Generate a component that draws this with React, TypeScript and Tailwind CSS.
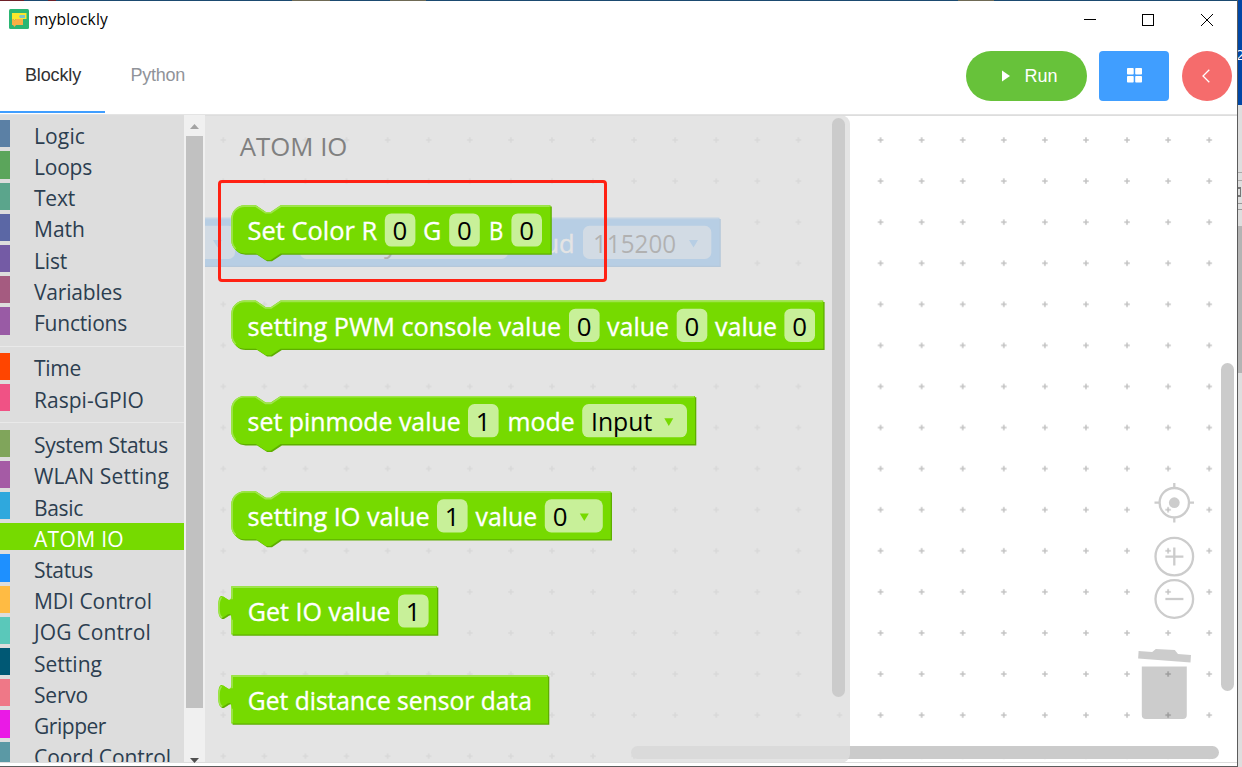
import React, { useLayoutEffect, useRef, useState } from "react";

const UI = "font-['Open_Sans','Noto_Sans',sans-serif]";
const ARIAL = "font-['Liberation_Sans',Arial,sans-serif]";

/* Text set to a fixed advance width by adjusting its tracking. */
function Fit({ width, children }: { width: number; children: string }) {
  const ref = useRef<HTMLSpanElement>(null);
  const [spacing, setSpacing] = useState(0);
  useLayoutEffect(() => {
    if (ref.current) {
      const natural = ref.current.getBoundingClientRect().width;
      setSpacing((width - natural) / children.length);
    }
  }, [width, children]);
  return (
    <span ref={ref} className="whitespace-nowrap" style={{ letterSpacing: `${spacing}px` }}>
      {children}
    </span>
  );
}

type Category = { name: string; width: number; bar: string; active?: boolean };

const groups: Category[][] = [
  [
    { name: "Logic", width: 51, bar: "bg-[#5b80a5]" },
    { name: "Loops", width: 58, bar: "bg-[#5ba55b]" },
    { name: "Text", width: 41, bar: "bg-[#5ba58c]" },
    { name: "Math", width: 51, bar: "bg-[#5b67a5]" },
    { name: "List", width: 33, bar: "bg-[#745ba5]" },
    { name: "Variables", width: 88, bar: "bg-[#a55b80]" },
    { name: "Functions", width: 93, bar: "bg-[#995ba5]" },
  ],
  [
    { name: "Time", width: 47, bar: "bg-[#ff4500]" },
    { name: "Raspi-GPIO", width: 110, bar: "bg-[#f05285]" },
  ],
  [
    { name: "System Status", width: 134, bar: "bg-[#80a55b]" },
    { name: "WLAN Setting", width: 135, bar: "bg-[#a55ba5]" },
    { name: "Basic", width: 49, bar: "bg-[#2fa8dd]" },
    { name: "ATOM IO", width: 90, bar: "bg-[#76da00]", active: true },
    { name: "Status", width: 59, bar: "bg-[#1e90ff]" },
    { name: "MDI Control", width: 118, bar: "bg-[#ffbb43]" },
    { name: "JOG Control", width: 117, bar: "bg-[#5ac8ba]" },
    { name: "Setting", width: 68, bar: "bg-[#005874]" },
    { name: "Servo", width: 54, bar: "bg-[#ef7887]" },
    { name: "Gripper", width: 72, bar: "bg-[#ea1ae6]" },
    { name: "Coord Control", width: 137, bar: "bg-[#5b99a5]" },
  ],
];

function Toolbox() {
  return (
    <div className={`h-full w-[184px] shrink-0 overflow-hidden bg-[#dddddd] pt-[5.2px] text-[21px] ${UI}`}>
      {groups.map((group, g) => (
        <div key={g} className={g > 0 ? "mt-[11px] border-t border-[#e9e9e9] pt-[6.4px]" : ""}>
          {group.map((c) => (
            <div
              key={c.name}
              className={`mb-[4px] flex h-[27.2px] items-center ${c.active ? "bg-[#76da00] text-white" : "text-[#2c3e50]"}`}
            >
              <div className={`h-full w-[10px] ${c.bar}`} />
              <div className="pl-[24px] pt-[4px] leading-[26px]">
                <Fit width={c.width}>{c.name}</Fit>
              </div>
            </div>
          ))}
        </div>
      ))}
    </div>
  );
}

function ToolboxScrollbar() {
  return (
    <div className="flex h-full w-[21px] shrink-0 flex-col items-center bg-[#f0f0f0]">
      <div className="flex h-[21px] shrink-0 items-center pt-[2px]">
        <svg width="9" height="5" viewBox="0 0 9 5"><path d="M0 5L4.5 0L9 5z" fill="#a3a3a3" /></svg>
      </div>
      <div className="mr-[1px] h-[572px] w-[17px] bg-[#c1c1c1]" />
      <div className="-mb-[1px] mt-auto"><svg width="9" height="5" viewBox="0 0 9 5"><path d="M0 0H9L4.5 5z" fill="#505050" /></svg></div>
    </div>
  );
}

type Item =
  | { kind: "label"; text: string; x1: number; x2: number }
  | { kind: "field"; text: string; x1: number; x2: number; t1: number; t2: number; arrow?: number };

type BlockProps = { shape: "stack" | "value"; x: number; y: number; right: number; items: Item[]; color: string; dark: string; light: string };

const H = 48.1;

function outline(shape: string, x: number, y: number, r: number) {
  return shape === "stack"
    ? `M${x} ${y + 13.1}a13.1 13.1 0 0 1 13.1 -13.1H${x + 24.6}l9.9 6.6h4.9l9.9 -6.6H${r}v${H}H${x + 49.3}l-9.9 6.6h-4.9l-9.9 -6.6H${x + 13.1}a13.1 13.1 0 0 1 -13.1 -13.1z`
    : `M${x} ${y}H${r}v${H}H${x}V${y + 32.9}c0 -16.4 -13.1 13.1 -13.1 -12.3s13.1 4.1 13.1 -12.3z`;
}

function highlight(shape: string, x: number, y: number, r: number) {
  const a = x + 0.8;
  const b = y + 0.8;
  return shape === "stack"
    ? `M${x + 4.4} ${y + H - 4.4}A12.3 12.3 0 0 1 ${a} ${y + H - 13.1}V${y + 13.1}A12.3 12.3 0 0 1 ${x + 13.1} ${b}H${x + 24.2}l9.9 6.6h5.7l9.9 -6.6H${r - 0.8}`
    : `M${a} ${y + H - 0.8}V${y + 33.5}M${x - 9} ${y + 31.2}c-3 -1 -3.4 -4.5 -3.4 -10c0 -5 .6 -8 2.6 -10.3M${a} ${y + 13}V${b}H${r - 0.8}`;
}

function Block({ shape, x, y, right, items, color, dark, light }: BlockProps) {
  return (
    <g>
      <path d={outline(shape, x, y, right)} fill={dark} transform="translate(1.3 1.3)" />
      <path d={outline(shape, x, y, right)} fill={color} />
      <path d={highlight(shape, x, y, right)} fill="none" stroke={light} strokeWidth="1.6" />
      {items.map((it, i) =>
        it.kind === "label" ? (
          <text key={i} x={it.x1 - 0.9} y={y + 35} textLength={it.x2 - it.x1 + 2} lengthAdjust="spacingAndGlyphs" fill="#fff" stroke="#fff" strokeWidth="0.35">
            {it.text}
          </text>
        ) : (
          <g key={i}>
            <rect x={it.x1} y={y + 8.1} width={it.x2 - it.x1} height="33.2" rx="6.5" fill="#fff" fillOpacity="0.6" />
            <text x={it.t1 - 1.0} y={y + 35} textLength={it.t2 - it.t1 + 2.2} lengthAdjust="spacingAndGlyphs" fill="#000">
              {it.text}
            </text>
            {it.arrow && <path d={`M${it.arrow} ${y + 22.3}h9l-4.5 7.6z`} fill={color} />}
          </g>
        ),
      )}
    </g>
  );
}

const label = (text: string, x1: number, x2: number): Item => ({ kind: "label", text, x1, x2 });
const field = (text: string, x1: number, x2: number, t1: number, t2: number, arrow?: number): Item => ({ kind: "field", text, x1, x2, t1, t2, arrow });
const digit = (text: string, x1: number): Item => field(text, x1, x1 + 30.6, x1 + 8.8, x1 + 21.4);

const green = { color: "#76da00", dark: "#5eae00", light: "#9fe54d" };

const flyoutBlocks: BlockProps[] = [
  { ...green, shape: "stack", x: 231.3, y: 205.3, right: 550.5, items: [label("Set Color R", 248.5, 376), digit("0", 384.8), label("G", 424, 440.3), digit("0", 449.2), label("B", 490.0, 502.3), digit("0", 511.4)] },
  { ...green, shape: "stack", x: 231.3, y: 300.6, right: 823.3, items: [label("setting PWM console value", 248.5, 560), digit("0", 569), label("value", 608, 668), digit("0", 676.7), label("value", 716, 776), digit("0", 784.4)] },
  { ...green, shape: "stack", x: 231.3, y: 396, right: 695, items: [label("set pinmode value", 248.5, 459.5), digit("1", 468), label("mode", 508.5, 573.5), field("Input", 582.2, 687, 592, 651, 664.3)] },
  { ...green, shape: "stack", x: 231.3, y: 491.2, right: 610.7, items: [label("setting IO value", 248.5, 428.5), digit("1", 437), label("value", 476.5, 536), field("0", 544.8, 602.8, 553.8, 566.4, 579.8)] },
  { ...green, shape: "value", x: 231.3, y: 586.3, right: 437, items: [label("Get IO value", 248.7, 389.5), digit("1", 398)] },
  { ...green, shape: "value", x: 231.3, y: 675.3, right: 548, items: [label("Get distance sensor data", 248.7, 530.7)] },
];

function Canvas() {
  return (
    <svg className={`block text-[25.5px] ${UI}`} width="1032" height="648" viewBox="205 115 1032 648" fill="currentColor">
      <defs>
        <pattern id="grid" x="202.76" y="119.46" width="41.08" height="41.08" patternUnits="userSpaceOnUse">
          <path d="M17.8 20.54h5.5M20.54 17.8v5.5" stroke="#c4c4c4" strokeWidth="1.6" />
        </pattern>
      </defs>
      <rect x="205" y="115" width="1032" height="648" fill="url(#grid)" />
      <Block
        shape="stack" x={-40} y={217.7} right={719.5} color="#1e90ff" dark="#1873cc" light="#62b1ff"
        items={[field("", 150, 235, 160, 170, 213), field("y", 300, 508, 385, 397), label("Baud", 514, 573.5), field("115200", 583, 711.3, 594, 675, 689)]}
      />
      <g fill="none" stroke="#cccccc" strokeWidth="2.3">
        <circle cx="1174.3" cy="502.7" r="14.7" />
        <circle cx="1174.3" cy="502.7" r="5.4" fill="#cccccc" stroke="none" />
        <path d="M1174.3 483v5M1174.3 517.5v5M1154.5 502.7h5M1189 502.7h5" />
        <circle cx="1174.3" cy="556.6" r="18.8" />
        <path d="M1165.4 556.6h18M1174.3 547.6v18" />
        <circle cx="1174.3" cy="599" r="18.8" />
        <path d="M1165.4 599h18" />
      </g>
      <path fill="#000" fillOpacity="0.2" d="M1141.8 666.5h45v48.5a4 4 0 0 1 -4 4h-37a4 4 0 0 1 -4 -4zM1138.6 651l13.6 1 3.6 -3 19 .9 3.2 4.2 13 1 -.5 7.5 -52.4 -4z" />
    </svg>
  );
}

function Flyout() {
  return (
    <div className="absolute left-0 top-0 h-[648px] w-[645px] rounded-r-[9px] bg-[#dddddd]/80">
      <svg className={`block text-[25.5px] ${UI}`} width="645" height="648" viewBox="205 115 645 648">
        <text x="239.8" y="156.2" textLength="107.6" lengthAdjust="spacingAndGlyphs" fill="#808080">ATOM IO</text>
        {flyoutBlocks.map((b) => <Block key={b.y} {...b} />)}
      </svg>
      <div className="absolute left-[626.5px] top-[3px] h-[579px] w-[13px] rounded-full bg-[#cbcbcb]" />
    </div>
  );
}

function TitleBar() {
  return (
    <div className="flex h-[38px] items-center justify-between pl-[9px] pr-[24px]">
      <div className="flex items-center gap-[5px] pb-[2px]">
        <svg width="20" height="20" viewBox="0 0 20 20">
          <rect width="20" height="20" rx="1.5" fill="#2bb673" />
          <path d="M3 4h14.500v6H7l-1.500 1.500L4 10H3z" fill="#fbe82c" />
          <path d="M3 10h1l1.500 1.500L7 10h7v6H7l-1.500 2L4 16H3z" fill="#fbaf45" />
          <path d="M10 7.500L11 6h5v3h-5z" fill="#7cc4c8" />
        </svg>
        <div className={`text-[15.500px] leading-[20px] text-black ${UI}`}><Fit width={74}>myblockly</Fit></div>
      </div>
      <svg width="130" height="14" viewBox="0 0 130 14" fill="none" stroke="#000" strokeWidth="1">
        <path d="M1 6.500h12" />
        <rect x="59.500" y="1.500" width="11" height="11" />
        <path d="M118 1l12 12M130 1l-12 12" />
      </svg>
    </div>
  );
}

function Header() {
  return (
    <div className={`flex h-[76px] justify-between border-b border-[#e4e4e4] text-[18px] ${ARIAL}`}>
      <div className="flex h-[74px]">
        <div className="w-[105px] border-b-2 border-[#409eff] pl-[25px] pt-[24px] leading-[24px] text-[#303133]"><Fit width={56}>Blockly</Fit></div>
        <div className="w-[105px] pl-[25.5px] pt-[24px] leading-[24px] text-[#909399]"><Fit width={54.5}>Python</Fit></div>
      </div>
      <div className="flex pr-[5px] pt-[12px]">
        <button className="mr-[12px] flex h-[50px] w-[121px] items-center rounded-full bg-[#67c23a] pl-[36px] text-white">
          <svg width="9" height="12" viewBox="0 0 9 12" className="-mt-[1px] mr-[13.500px]"><path d="M0 .5L8 6L0 11.500z" fill="#fff" /></svg>
          <Fit width={33}>Run</Fit>
        </button>
        <button className="mr-[13px] flex h-[50px] w-[70px] items-center justify-center rounded-[4px] bg-[#409eff] pb-[1px]">
          <svg width="15" height="15" viewBox="0 0 15 15" fill="#fff">
            <rect x="0" y="0" width="6.700" height="6.500" rx=".8" /><rect x="8.200" y="0" width="6.800" height="6.500" rx=".8" />
            <rect x="0" y="8" width="6.700" height="6.500" rx=".8" /><rect x="8.200" y="8" width="6.800" height="6.500" rx=".8" />
          </svg>
        </button>
        <button className="flex h-[50px] w-[50px] items-center justify-center rounded-full bg-[#f56c6c] pr-[2px]">
          <svg width="8" height="14" viewBox="0 0 8 14" fill="none" stroke="#fff" strokeWidth="1.300"><path d="M7.300 .7L1 7l6.300 6.300" /></svg>
        </button>
      </div>
    </div>
  );
}

function DesktopEdge() {
  return (
    <div className="flex h-[767px] w-[4px] flex-col overflow-hidden bg-[#dedede]">
      <div className={`h-[105px] shrink-0 overflow-hidden bg-[#0047a6] pt-[46px] text-[15px] leading-[17px] text-white ${UI}`}>
        <div className="-ml-[2px]">2</div>
      </div>
      <div className="h-[68px] shrink-0 border-b border-[#aaaaaa]" />
      <div className="h-[8px] shrink-0 border-b border-[#aaaaaa]" />
      <div className="my-[6px] h-[10px] w-[3px] shrink-0 border-y-2 border-r border-[#777777]" />
      <div className="h-[7px] shrink-0 border-y border-[#999999]" />
      <div className="mt-[16px] h-[147px] shrink-0 bg-[#b4b4b4]" />
    </div>
  );
}

export default function App() {
  return (
    <div className="flex h-[767px] w-[1242px] overflow-hidden bg-white">
      <div className="flex h-[767px] w-[1238px] flex-col border-b border-r border-[#5c5c5c] bg-white">
        <div className="flex h-px shrink-0 bg-[#1b4a70]">
          <div className="h-px w-[24px] bg-[#6e2028]" />
          <div className="ml-[24px] h-px w-[8px] bg-[#6e2028]" />
          <div className="ml-[236px] h-px w-[38px] bg-[#6f6a55]" />
          <div className="ml-[60px] h-px w-[36px] bg-[#6f6a55]" />
          <div className="ml-[532px] h-px w-[36px] bg-[#6f6a55]" />
        </div>
        <TitleBar />
        <Header />
        <div className="flex h-[648px] shrink-0 border-b border-[#dddddd]">
          <Toolbox />
          <ToolboxScrollbar />
          <div className="relative h-[648px] w-[1032px] overflow-hidden">
            <Canvas />
            <div className="absolute left-0 top-0 h-px w-full bg-[#dddddd]" />
            <div className="absolute left-[426px] top-[631px] h-[13px] w-[588px] rounded-full bg-[#cbcbcb]" />
            <div className="absolute left-[1016px] top-[248px] h-[328px] w-[13px] rounded-full bg-[#cbcbcb]" />
            <Flyout />
            <div className="absolute left-[13px] top-[65px] h-[102px] w-[389px] rounded-[4px] border-[3px] border-[#ff2113]" />
          </div>
        </div>
      </div>
      <DesktopEdge />
    </div>
  );
}
